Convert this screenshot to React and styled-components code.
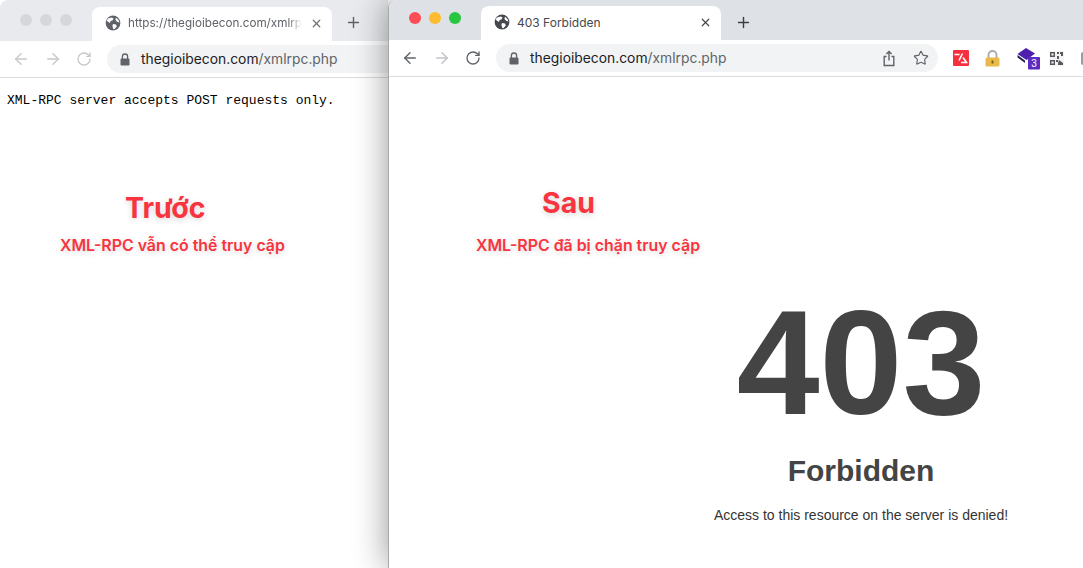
import styled, { createGlobalStyle } from "styled-components"
import { ArrowLeft, ArrowRight, RotateCw, Plus, X, Star } from "lucide-react"

const GlobalStyle = createGlobalStyle`
    html, body {
        margin: 0;
        height: 100%;
        overflow: hidden;
        background: #fff;
    }
    #root {
        height: 100%;
    }
`

function Globe({ color }) {
    return (
        <svg width="16" height="16" viewBox="0 0 16 16">
            <circle cx="8" cy="8" r="7.4" fill={color} />
            <path d="M3 3.6 6.6 2.4 8.6 3.6 7.4 5.6 5.6 6 5 8 3 6.8 1.6 5.4Z M8 9 11 9.6 11.8 11.4 9.6 14 8.4 14.2 7.4 11Z M11 2.8 13.6 5 14.4 7.4 12 6.8 10.4 4.8Z" fill="#fff" />
        </svg>
    )
}

function PadLock() {
    return (
        <svg width="10" height="13" viewBox="0 0 10 13">
            <path d="M2.4 6V3.6a2.6 2.6 0 0 1 5.2 0V6" fill="none" stroke="#5f6368" strokeWidth="1.3" />
            <rect x="0.5" y="5.5" width="9" height="7" rx="1.2" fill="#5f6368" />
        </svg>
    )
}

function ShareIcon() {
    return (
        <svg width="16" height="17" viewBox="0 0 16 17" fill="none" stroke="#5f6368" strokeWidth="1.4">
            <path d="M5.5 6.5H3.2V15.5H12.8V6.5H10.5" />
            <path d="M8 10.5V1.6M5.4 4 8 1.4 10.6 4" />
        </svg>
    )
}

function TranslateExt() {
    return (
        <svg width="16" height="16" viewBox="0 0 16 16">
            <rect width="16" height="16" rx="1" fill="#f7303f" />
            <path d="M1.5 4.5H6.5M9.5 3.5 6 10.5M10 7.5 13.5 12.5H8" fill="none" stroke="#fff" strokeWidth="1.6" />
        </svg>
    )
}

function LockExt() {
    return (
        <svg width="15" height="17" viewBox="0 0 15 17">
            <path d="M3.5 8V5a4 4 0 0 1 8 0v3" fill="none" stroke="#a9a9a9" strokeWidth="1.8" />
            <rect x="0.5" y="7.5" width="14" height="9" rx="1.5" fill="#e9b949" />
            <rect x="6.6" y="10.5" width="1.8" height="3" fill="#7a5a14" />
        </svg>
    )
}

function StackExt() {
    return (
        <svg width="23" height="23" viewBox="0 0 23 23">
            <path d="M0.5 7 9 1 18 6.5 9.5 13Z" fill="#4f1fae" />
            <path d="M0.5 8 8 13.5V16L0.5 10.5Z" fill="#2b2150" />
            <rect x="11" y="10" width="12" height="12.5" rx="1" fill="#5a2cc0" />
            <text x="17" y="20" textAnchor="middle" fontSize="10" fontFamily="Liberation Sans, sans-serif" fill="#fff">3</text>
        </svg>
    )
}

function QrExt() {
    return (
        <svg width="15" height="15" viewBox="0 0 15 15">
            <rect width="15" height="15" fill="#f3f3f3" />
            <path d="M1 1H6V6H1ZM2.4 2.4V4.6H4.6V2.4Z M1 9H6V14H1ZM2.4 10.4V12.6H4.6V10.4Z M8 1H10V3H8Z M11 1H14V5H12V3H11Z M8 5H10V8H8Z M7 9H9V11H7Z M10 9 14 12V14H9V12Z" fill="#55585c" fillRule="evenodd" />
        </svg>
    )
}

function PuzzleExt() {
    return (
        <svg width="15" height="15" viewBox="0 0 15 15">
            <rect x="0" y="1" width="13" height="13" rx="2" fill="#9a9da1" />
        </svg>
    )
}

export default function App() {
    return (
        <>
            <GlobalStyle />
            <Desktop>
                <BackWindow>
                    <TabStrip $height={41} $background="#e8eaed">
                        <Lights $offset={0}>
                            <Light $color="#d5d7da" />
                            <Light $color="#d5d7da" />
                            <Light $color="#d5d7da" />
                        </Lights>
                        <Tab $top={7}>
                            <Globe color="#5f6368" />
                            <TabTitle $color="#5f6368" $fade>https://thegioibecon.com/xmlrp</TabTitle>
                            <CloseIcon><X size={13} color="#6f7378" strokeWidth={2.2} /></CloseIcon>
                        </Tab>
                        <NewTab $left={13}><Plus size={17} color="#5f6368" strokeWidth={2} /></NewTab>
                    </TabStrip>
                    <Toolbar>
                        <NavIcons $pad={12}>
                            <ArrowLeft size={18} color="#c6c8cb" strokeWidth={1.9} />
                            <ArrowRight size={18} color="#c6c8cb" strokeWidth={1.9} />
                            <RotateCw size={16} color="#c6c8cb" strokeWidth={2} />
                        </NavIcons>
                        <AddressBar $width={600} $left={15}>
                            <PadLock />
                            <Url>thegioibecon.com<UrlPath>/xmlrpc.php</UrlPath></Url>
                        </AddressBar>
                    </Toolbar>
                    <PlainBody>XML-RPC server accepts POST requests only.</PlainBody>
                    <BackNotes>
                        <NoteTitle $left={125}>Trước</NoteTitle>
                        <NoteText $top={11} $left={60}>XML-RPC vẫn có thể truy cập</NoteText>
                    </BackNotes>
                </BackWindow>
                <FrontWindow>
                    <TabStrip $height={40} $background="#dee1e6">
                        <Lights $offset={-2}>
                            <Light $color="#fc4d57" />
                            <Light $color="#fcbc2e" />
                            <Light $color="#27c740" />
                        </Lights>
                        <Tab $top={6}>
                            <Globe color="#45484d" />
                            <TabTitle $color="#45484d">403 Forbidden</TabTitle>
                            <CloseIcon><X size={13} color="#45484d" strokeWidth={2.2} /></CloseIcon>
                        </Tab>
                        <NewTab $left={14}><Plus size={17} color="#3c4043" strokeWidth={2} /></NewTab>
                    </TabStrip>
                    <Toolbar>
                        <NavIcons $pad={12}>
                            <ArrowLeft size={18} color="#5f6368" strokeWidth={1.9} />
                            <ArrowRight size={18} color="#c2c4c7" strokeWidth={1.9} />
                            <RotateCw size={16} color="#5f6368" strokeWidth={2} />
                        </NavIcons>
                        <AddressBar $width={442} $left={15}>
                            <PadLock />
                            <Url>thegioibecon.com<UrlPath>/xmlrpc.php</UrlPath></Url>
                            <BarActions>
                                <ShareIcon />
                                <Star size={16} color="#5f6368" strokeWidth={1.7} />
                            </BarActions>
                        </AddressBar>
                        <Extensions>
                            <ExtSlot><TranslateExt /></ExtSlot>
                            <ExtSlot><LockExt /></ExtSlot>
                            <ExtSlot><StackExt /></ExtSlot>
                            <ExtSlot><QrExt /></ExtSlot>
                            <ExtSlot><PuzzleExt /></ExtSlot>
                        </Extensions>
                    </Toolbar>
                    <FrontNotes>
                        <NoteTitle $left={153}>Sau</NoteTitle>
                        <NoteText $top={16} $left={87}>XML-RPC đã bị chặn truy cập</NoteText>
                    </FrontNotes>
                    <ErrorBlock>
                        <ErrorCode>403</ErrorCode>
                        <ErrorTitle>Forbidden</ErrorTitle>
                        <ErrorMessage>Access to this resource on the server is denied!</ErrorMessage>
                    </ErrorBlock>
                </FrontWindow>
            </Desktop>
        </>
    )
}

const Desktop = styled.div`
    display: flex;
    width: 1083px;
    height: 568px;
    overflow: hidden;
    font-family: "Inter", "Liberation Sans", sans-serif;
`
const BackWindow = styled.div`
    flex: 0 0 388px;
    min-width: 0;
    overflow: hidden;
    background: #fff;
`
const FrontWindow = styled.div`
    flex: 0 0 945px;
    height: 568px;
    background: #fff;
    border-top-left-radius: 8px;
    box-shadow: 0 0 34px rgba(0, 0, 0, 0.42);
    border-left: 1px solid #a9a9a9;
    box-sizing: border-box;
    position: relative;
`
const TabStrip = styled.div`
    display: flex;
    height: ${props => props.$height}px;
    background: ${props => props.$background};
    border-top-left-radius: 8px;
    box-sizing: border-box;
`
const Lights = styled.div`
    display: flex;
    align-items: center;
    gap: 8px;
    padding-left: 20px;
    height: 40px;
    margin-top: ${props => props.$offset}px;
`
const Light = styled.span`
    width: 12px;
    height: 12px;
    border-radius: 50%;
    background: ${props => props.$color};
`
const Tab = styled.div`
    display: flex;
    align-items: center;
    flex: 0 0 240px;
    min-width: 0;
    margin-left: 20px;
    margin-top: ${props => props.$top}px;
    padding: 0 9px 2px 13px;
    box-sizing: border-box;
    background: #fff;
    border-radius: 8px 8px 0 0;
`
const TabTitle = styled.span`
    flex: 1;
    min-width: 0;
    margin-left: 7px;
    font-size: ${props => props.$fade ? 11.7 : 12}px;
    color: ${props => props.$color};
    white-space: nowrap;
    overflow: hidden;
    ${props => props.$fade && "mask-image: linear-gradient(to right, #000 92%, transparent);"}
`
const CloseIcon = styled.span`
    display: flex;
    margin-left: 8px;
`
const NewTab = styled.span`
    display: flex;
    align-items: center;
    margin-left: ${props => props.$left}px;
    margin-top: 4px;
`
const Toolbar = styled.div`
    display: flex;
    align-items: center;
    height: 37px;
    background: #fff;
    border-bottom: 1px solid #dadce0;
    box-sizing: border-box;
`
const NavIcons = styled.div`
    display: flex;
    align-items: center;
    gap: 14px;
    padding-left: ${props => props.$pad}px;
`
const AddressBar = styled.div`
    display: flex;
    align-items: center;
    flex: 0 0 ${props => props.$width}px;
    min-width: 0;
    height: 28px;
    margin-left: ${props => props.$left}px;
    padding: 0 9px 0 13px;
    box-sizing: border-box;
    background: #f1f3f4;
    border-radius: 14px;
`
const Url = styled.span`
    margin-left: 11px;
    font-size: 13.85px;
    color: #202124;
    white-space: nowrap;
`
const UrlPath = styled.span`
    color: #5f6368;
`
const BarActions = styled.div`
    display: flex;
    align-items: center;
    gap: 16px;
    margin-left: auto;
`
const Extensions = styled.div`
    display: flex;
    align-items: center;
    gap: 16px;
    margin-left: 15px;
`
const ExtSlot = styled.span`
    display: flex;
    align-items: center;
    flex: 0 0 16px;
    width: 16px;
    height: 23px;
    svg {
        flex: none;
    }
`
const PlainBody = styled.pre`
    margin: 0;
    padding: 15px 0 0 7px;
    height: 15px;
    font-family: "Liberation Mono", monospace;
    font-size: 13px;
    line-height: 15px;
    color: #000;
`
const BackNotes = styled.div`
    padding-top: 82px;
`
const FrontNotes = styled.div`
    position: absolute;
    top: 185px;
    left: 0;
`
const NoteTitle = styled.div`
    margin-left: ${props => props.$left}px;
    font-size: 28.5px;
    line-height: 35px;
    font-weight: 700;
    color: #f9343f;
    text-shadow: 0 2px 6px rgba(0, 0, 0, 0.16);
`
const NoteText = styled.div`
    margin-top: ${props => props.$top}px;
    margin-left: ${props => props.$left}px;
    font-size: 15.9px;
    line-height: 20px;
    font-weight: 600;
    color: #f9343f;
    text-shadow: 0 2px 6px rgba(0, 0, 0, 0.16);
    white-space: nowrap;
`
const ErrorBlock = styled.div`
    display: flex;
    flex-direction: column;
    align-items: center;
    padding-top: 211px;
    font-family: "Liberation Sans", Arial, sans-serif;
    color: #444;
`
const ErrorCode = styled.div`
    font-size: 149px;
    line-height: 150px;
    font-weight: 700;
`
const ErrorTitle = styled.div`
    margin-top: 15px;
    font-size: 30px;
    line-height: 36px;
    font-weight: 700;
`
const ErrorMessage = styled.div`
    margin-top: 17px;
    font-size: 14px;
    line-height: 18px;
    color: #333;
`
